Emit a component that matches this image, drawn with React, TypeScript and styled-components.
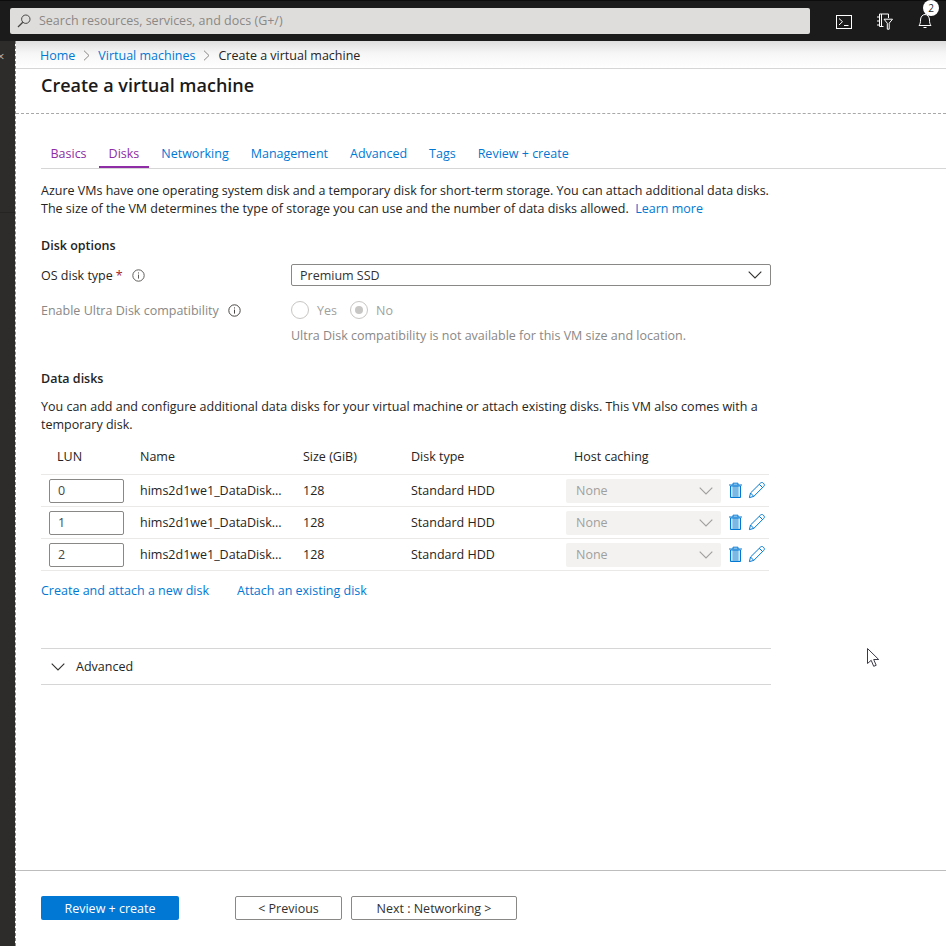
import React from "react";
import styled, { createGlobalStyle } from "styled-components";

const Global = createGlobalStyle`
  html, body { margin: 0; padding: 0; background: #fff; }
  body { font-family: "Open Sans", "Noto Sans", sans-serif; font-size: 12.5px; color: #252423; }
  * { box-sizing: border-box; }
`;

const Shell = styled.div`
  position: relative; width: 946px; height: 946px; overflow: hidden;
  display: flex; flex-direction: column; background: #fff;
`;
const TopBar = styled.header`
  height: 41px; flex: none; background: #1b1b1b; border-top: 1px solid #0c0c0c;
  display: flex; align-items: center; padding: 0 0 0 10px;
`;
const Search = styled.div`
  width: 800px; height: 26px; background: #dfdddb; border-radius: 2px; margin-top: -1px;
  display: flex; align-items: center; gap: 8px; padding-left: 7px; color: #8a8886; font-size: 12.5px;
`;
const TopIcons = styled.div`
  display: flex; align-items: center; margin-left: 26px; gap: 24px; color: #fff; margin-top: 1px;
`;
const BellWrap = styled.div`position: relative; width: 16px; height: 18px; margin-left: 1px;`;
const Badge = styled.span`
  position: absolute; left: 5px; top: -13px; width: 16px; height: 16px; border-radius: 50%;
  background: #fff; color: #252423; font-size: 10px; display: flex; align-items: center; justify-content: center;
`;
const Body = styled.div`flex: 1; display: flex; min-height: 0;`;
const Side = styled.aside`
  width: 15px; flex: none; background: #2d2c2a; color: #b5b3b1; font-size: 13px; overflow: hidden;
  display: flex; flex-direction: column;
`;
const SideClose = styled.div`height: 172px; padding-top: 6px; margin-left: -3px; border-bottom: 1px solid #252423;`;
const Main = styled.main`
  flex: 1; display: flex; flex-direction: column; min-width: 0;
  border-left: 1px dashed #2aa9d2; margin-left: 0;
`;
const Crumbs = styled.nav`
  height: 28px; flex: none; padding: 1px 0 0 24px; display: flex; align-items: center; gap: 8px;
  background: linear-gradient(#dedede, #f6f6f6 45%, #fff); border-bottom: 1px solid #d6d6d6;
`;
const CrumbLink = styled.a`color: #0078d4;`;
const Title = styled.h1`
  margin: 0; height: 45px; flex: none; padding: 3px 0 0 25px; font-size: 18px; line-height: 26px; font-weight: 600; color: #1b1a19;
  border-bottom: 1px dashed #a8a8a8;
`;
const Tabs = styled.div`
  margin: 29px 0 0 25px; height: 26px; flex: none; display: flex; border-bottom: 1px solid #d6d6d6;
`;
const Tab = styled.div<{ $visited?: boolean; $active?: boolean }>`
  padding: 0 9.5px; margin-right: 3px; height: 25px; line-height: 22px; white-space: nowrap;
  color: ${p => (p.$visited ? "#8e2da5" : "#0078d4")};
  border-bottom: 2px solid ${p => (p.$active ? "#8e2da5" : "transparent")};
  margin-left: ${p => (p.$visited && !p.$active ? "0" : "0")};
`;
const Form = styled.section`flex: 1; padding: 13px 0 0 25px; width: 756px; min-height: 0;`;
const Para = styled.p`margin: 0; line-height: 18px; width: 730px; color: #252423;`;
const Link = styled.a`color: #0078d4;`;
const Heading = styled.h2<{ $top: number }>`
  margin: ${p => p.$top}px 0 0; font-size: 12.5px; line-height: 18px; font-weight: 600; color: #252423;
`;
const FieldRow = styled.div<{ $top: number }>`
  display: grid; grid-template-columns: 250px 480px; align-items: center; margin-top: ${p => p.$top}px;
`;
const FieldLabel = styled.div<{ $off?: boolean }>`
  display: flex; align-items: center; gap: 9px; color: ${p => (p.$off ? "#8a8886" : "#252423")};
`;
const Star = styled.span`color: #a4262c; margin-left: -6px;`;
const SelectBox = styled.div`
  height: 22px; border: 1px solid #8a8886; border-radius: 2px; display: flex; align-items: center;
  justify-content: space-between; padding: 0 8px; color: #323130;
`;
const Radios = styled.div`display: flex; align-items: center; color: #a19f9d;`;
const Radio = styled.span<{ $on?: boolean }>`
  width: 18px; height: 18px; border: 1px solid #c8c6c4; border-radius: 50%; margin-right: 8px; flex: none;
  display: flex; align-items: center; justify-content: center;
  &::after { content: ""; width: 8px; height: 8px; border-radius: 50%; background: ${p => (p.$on ? "#c8c6c4" : "transparent")}; }
`;
const RadioText = styled.span`margin-right: 13px;`;
const Note = styled.div`margin: 8px 0 0 250px; line-height: 18px; color: #8a8886;`;
const Table = styled.div`width: 728px; margin-top: 8px;`;
const Cols = styled.div`
  display: grid; grid-template-columns: 99px 163px 108px 155px 1fr; align-items: center;
`;
const HeadRow = styled(Cols)`height: 33px; border-bottom: 1px solid #ebe9e7; font-weight: 500; color: #252423; padding-bottom: 4px;`;
const Row = styled(Cols)`height: 32px; border-bottom: 1px solid #ebe9e7; color: #252423;`;
const LunHead = styled.span`padding-left: 16px;`;
const HostHead = styled.span`padding-left: 8px;`;
const LunInput = styled.div`
  width: 75px; height: 24px; margin-left: 8px; border: 1px solid #8a8886; border-radius: 2px;
  display: flex; align-items: center; padding-left: 8px; color: #484644;
`;
const HostCell = styled.div`display: flex; align-items: center;`;
const HostSelect = styled.div`
  width: 155px; height: 24px; background: #f3f2f1; border-radius: 2px; padding: 0 8px 0 10px; color: #a19f9d;
  display: flex; align-items: center; justify-content: space-between;
`;
const RowActions = styled.div`display: flex; align-items: center; gap: 5px; margin-left: 7px;`;
const LinkRow = styled.div`display: flex; gap: 28px; margin-top: 11px; line-height: 18px;`;
const Advanced = styled.div`
  width: 730px; height: 37px; margin-top: 48px; border-top: 1px solid #d6d6d6; border-bottom: 1px solid #d6d6d6;
  display: flex; align-items: center; gap: 11px; padding-left: 10px; font-weight: 500; color: #252423;
`;
const Footer = styled.footer`
  height: 76px; flex: none; border-top: 1px solid #bdbdbd; padding: 25px 0 0 25px; display: flex; align-items: flex-start;
`;
const Primary = styled.button`
  width: 138px; height: 24px; border: 0; border-radius: 2px; background: #0078d4; color: #fff; font: inherit; margin-right: 56px; padding: 0;
`;
const Secondary = styled.button<{ $w: number }>`
  width: ${p => p.$w}px; height: 24px; border: 1px solid #8a8886; border-radius: 2px; background: #fff; color: #323130; font: inherit; margin-right: 9px; padding: 0;
`;
const Cursor = styled.svg`position: absolute; left: 867px; top: 648px;`;

const Chevron = ({ c = "#323130", w = 14 }: { c?: string; w?: number }) => (
  <svg width={w} height={8} viewBox="0 0 14 8" fill="none"><path d="M.7.7 7 7l6.3-6.3" stroke={c} strokeWidth="1.1" /></svg>
);
const Sep = () => (
  <svg width="7" height="11" viewBox="0 0 7 11" fill="none"><path d="m1 .7 5 4.8-5 4.8" stroke="#8a8886" /></svg>
);
const Info = ({ c = "#605e5c" }: { c?: string }) => (
  <svg width="13" height="13" viewBox="0 0 13 13" fill="none">
    <circle cx="6.5" cy="6.5" r="5.7" stroke={c} />
    <path d="M6.5 5.6v4M6.5 3.4v1.1" stroke={c} />
  </svg>
);
const Trash = () => (
  <svg width="15" height="17" viewBox="0 0 15 17" fill="none">
    <path d="M2.5 4h10v11.5h-10z" fill="#7ab8e6" stroke="#0078d4" />
    <path d="M1 3h13M5 3V1.2h5V3" stroke="#0078d4" />
    <path d="M3.2 4.6h1.2v10.2H3.2zM10.6 4.6h1.2v10.2h-1.2z" fill="#e8f3fb" />
  </svg>
);
const Pencil = () => (
  <svg width="17" height="17" viewBox="0 0 17 17" fill="none">
    <path d="M1.4 15.6 2.5 11 12.6 1c.8-.7 1.8-.7 2.5 0l.8.8c.7.8.6 1.8-.1 2.5L5.8 14.4z" stroke="#0078d4" />
    <path d="m2.5 11 3.3 3.4M11.3 2.3l3.4 3.4" stroke="#0078d4" />
  </svg>
);

const disks = ["0", "1", "2"];

export default function App() {
  return (
    <Shell>
      <Global />
      <TopBar>
        <Search>
          <svg width="14" height="14" viewBox="0 0 14 14" fill="none">
            <circle cx="8.8" cy="5.2" r="4.2" stroke="#484644" />
            <path d="M5.8 8.2 1 13" stroke="#484644" strokeWidth="1.3" />
          </svg>
          <span>Search resources, services, and docs (G+/)</span>
        </Search>
        <TopIcons>
          <svg width="16" height="14" viewBox="0 0 16 14" fill="none">
            <rect x=".5" y=".5" width="15" height="13" stroke="#fff" />
            <path d="m3 3.5 3.5 3.2L3 10M8 10.5h4.5" stroke="#fff" />
          </svg>
          <svg width="17" height="17" viewBox="0 0 17 17" fill="none">
            <path d="M12.5 5V1H3.5v12.5h4" stroke="#fff" />
            <path d="M2 3v2M2 7v2M2 11v2M5.5 1v12.5" stroke="#fff" />
            <path d="M8 6.2h8.5l-3.3 4v6h-1.9v-6z" stroke="#fff" />
          </svg>
          <BellWrap>
            <svg width="14" height="15" viewBox="0 0 14 15" fill="none">
              <path d="M1 12.5c1.2-1.5 1.5-3 1.5-5.5C2.500 4 4.500 1.500 7 1.500S11.500 4 11.500 7c0 2.500.3 4 1.500 5.500zM5.500 14.500h3" stroke="#fff" />
            </svg>
            <Badge>2</Badge>
          </BellWrap>
        </TopIcons>
      </TopBar>
      <Body>
        <Side><SideClose>×</SideClose></Side>
        <Main>
          <Crumbs>
            <CrumbLink>Home</CrumbLink><Sep />
            <CrumbLink>Virtual machines</CrumbLink><Sep />
            <span>Create a virtual machine</span>
          </Crumbs>
          <Title>Create a virtual machine</Title>
          <Tabs>
            <Tab $visited>Basics</Tab>
            <Tab $visited $active>Disks</Tab>
            <Tab>Networking</Tab>
            <Tab>Management</Tab>
            <Tab>Advanced</Tab>
            <Tab>Tags</Tab>
            <Tab>Review + create</Tab>
          </Tabs>
          <Form>
            <Para>
              Azure VMs have one operating system disk and a temporary disk for short-term storage. You can attach additional data disks. The size of the VM determines the type of storage you can use and the number of data disks allowed.&nbsp; <Link>Learn more</Link>
            </Para>
            <Heading $top={19}>Disk options</Heading>
            <FieldRow $top={9}>
              <FieldLabel>OS disk type <Star>*</Star> <Info /></FieldLabel>
              <SelectBox>Premium SSD <Chevron /></SelectBox>
            </FieldRow>
            <FieldRow $top={15}>
              <FieldLabel $off>Enable Ultra Disk compatibility <Info c="#484644" /></FieldLabel>
              <Radios><Radio /><RadioText>Yes</RadioText><Radio $on /><span>No</span></Radios>
            </FieldRow>
            <Note>Ultra Disk compatibility is not available for this VM size and location.</Note>
            <Heading $top={25}>Data disks</Heading>
            <Para style={{ marginTop: 10 }}>You can add and configure additional data disks for your virtual machine or attach existing disks. This VM also comes with a temporary disk.</Para>
            <Table>
              <HeadRow>
                <LunHead>LUN</LunHead><span>Name</span><span>Size (GiB)</span><span>Disk type</span><HostHead>Host caching</HostHead>
              </HeadRow>
              {disks.map(d => (
                <Row key={d}>
                  <LunInput>{d}</LunInput>
                  <span>hims2d1we1_DataDisk...</span>
                  <span>128</span>
                  <span>Standard HDD</span>
                  <HostCell>
                    <HostSelect>None <Chevron c="#a19f9d" /></HostSelect>
                    <RowActions><Trash /><Pencil /></RowActions>
                  </HostCell>
                </Row>
              ))}
            </Table>
            <LinkRow><Link>Create and attach a new disk</Link><Link>Attach an existing disk</Link></LinkRow>
            <Advanced><Chevron c="#323130" />Advanced</Advanced>
          </Form>
          <Footer>
            <Primary>Review + create</Primary>
            <Secondary $w={107}>&lt; Previous</Secondary>
            <Secondary $w={166}>Next : Networking &gt;</Secondary>
          </Footer>
        </Main>
      </Body>
      <Cursor width="13" height="20" viewBox="0 0 13 20" fill="none">
        <path d="M.5.5v15l3.700-3.200 2.500 6 2.500-1-2.500-5.800h5z" fill="#fff" stroke="#3b3a48" />
      </Cursor>
    </Shell>
  );
}
